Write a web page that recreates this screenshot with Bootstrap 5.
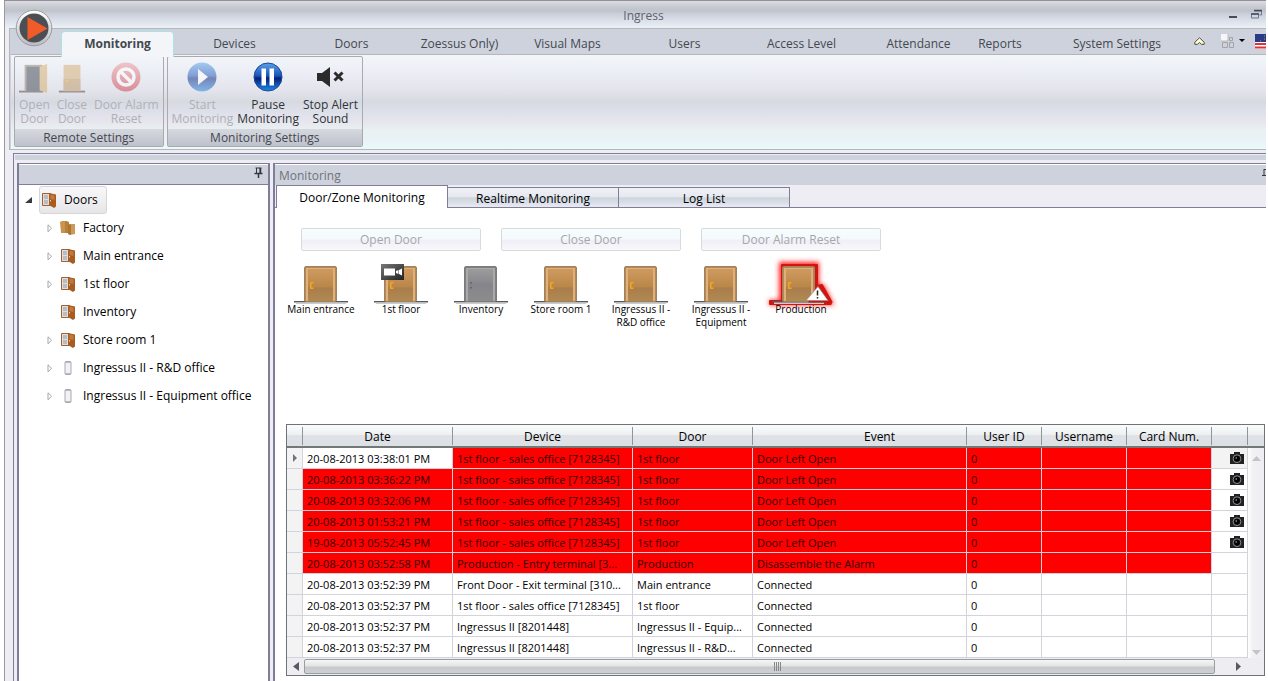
<!DOCTYPE html>
<html lang="en">
<head>
<meta charset="utf-8">
<meta name="viewport" content="width=device-width, initial-scale=1">
<title>Ingress</title>
<link href="https://cdn.jsdelivr.net/npm/bootstrap@5.3.0/dist/css/bootstrap.min.css" rel="stylesheet">
<style>
:root{--line:#807d9b;--pane:#eeedf3;--bar:#ced2dd;--ink:#43484f}
body{font-family:"Open Sans","Noto Sans",sans-serif;font-size:12px;line-height:16px;color:#000;background:#fff}
a{color:inherit;text-decoration:none}
button{font:inherit;color:inherit}
.app-window{min-height:100vh;margin:0 2px 0 4px;background:var(--pane);border-left:1px solid #99989e;border-top:1px solid #929096}
.title-bar{height:27px;color:#5d626b;background:linear-gradient(#dcdce4 0,#c5c9cf 24%,#bec4ca 36%,#cdd1dd 50%,#dfe3ec 78%,#e9f1f6 100%)}
.title-bar .caption{padding-top:7px}
.win-btn{border:0;background:none;padding:0;line-height:0}
.ribbon{margin-left:4px;border:1px solid #b6b6b8;border-right:0;background:var(--bar)}
.orb{position:absolute;left:10px;top:8px;width:38px;height:38px;z-index:3}
.tab-row{height:25px;padding-left:49px;color:var(--ink)}
.tab-row a{width:117px;height:25px;padding-top:7px;text-align:center;white-space:nowrap}
.tab-row a.w-zone{width:99px}
.tab-row a.w-rep{width:46px}
.tab-row a.w-sys{width:148px;margin-left:20px}
.tab-row a.current{width:113px;height:26px;margin:2px 2px 0;padding-top:4px;font-weight:700;background:#f4f5f8;border:1px solid #a9e3e6;border-bottom:0;border-radius:4px 4px 0 0;position:relative}
.ribbon-body{margin:0 0 0 1px;padding:1px 0 2px 3px;gap:3px;border-top:1px solid #b6b6b8;background:linear-gradient(#f2f6fa 0,#e9ebf2 25%,#e4e3eb 38%,#d6dae0 50%,#dcdfe8 58%,#e6e5ee 70%,#e9f1f1 80%,#eaf1f8 90%,#e8fbfa 100%)}
.tool-group{border:1px solid #a9a9ae;border-radius:2px;height:91px}
.tool-group .tools{height:72px;padding:4px 4px 0;gap:7px}
.tool-group .tools.tight{gap:4px}
.tool{border:0;background:none;padding:0;line-height:14px;color:#2f3439;font-size:12px;white-space:nowrap}
.tool svg{display:block;width:32px;height:34px;margin:0 auto 3px}
.tool.slim svg{width:30px}
.tool:disabled{color:#aeb1b7}
.tool:disabled svg{opacity:.5}
.tool-group .name{height:17px;line-height:17px;text-align:center;color:var(--ink);background:linear-gradient(#d6d8df,#bfc2cc)}
.workspace{margin:3px 0 0 8px;border-left:1px solid var(--line);border-top:1px solid var(--line);padding-left:3px}
.dock-strip{height:5px;margin:1px 0 3px -2px;background:var(--bar)}
.dock-gap{gap:3px}
.pane{border:1px solid var(--line);border-bottom:0}
.pane-left{width:253px;border-width:1px 2px 0}
.pane-main{border-width:1px 0 0 2px;min-width:0}
.pane-left .pane-head{height:20px;border:solid var(--line);border-width:0 0 1px;margin-top:1px}
.pane-head{background:var(--bar)}
.pane-main .pane-head{height:20px;margin-top:1px;padding:3px 0 0 4px;color:#6f737b}
.tree{padding:1px 0 0 6px}
.tree ul{list-style:none;margin:0;padding:0 0 0 20px}
.tree .node{height:28px}
.twist{width:8px;height:9px;margin-right:6px;flex:none}
.node a{display:flex;align-items:center;height:28px;padding:0 8px 0 0;gap:7px;white-space:nowrap;border:1px solid transparent}
.node a.chosen{padding-left:1px;border-color:#d6d6d8;border-radius:3px;background:linear-gradient(#f8f8f9,#e6e6e8)}
.node svg.pic{width:16px;height:16px;flex:none}
.view-tabs{height:23px;background:var(--pane);border-bottom:1px solid var(--line);padding-left:1px}
.view-tabs .nav-link{width:171px;height:20px;padding:0;line-height:21px;margin-top:2px;color:#000;text-align:center;border:1px solid var(--line);border-left:0;border-bottom:0;background:linear-gradient(#f0f1f5 0,#e6e9f0 45%,#cfd5dd 52%,#d9dde6 75%,#e9ebf1 100%)}
.view-tabs .nav-link.active{width:172px;height:23px;margin-top:0;line-height:23px;background:#fff;border-left:1px solid var(--line);position:relative}
.actions{padding:20px 0 0 26px;gap:20px}
.soft-btn{width:180px;height:23px;padding:0;border:1px solid #d8dade;border-radius:2px;color:#a6a6aa!important;background:linear-gradient(#f5fdfd 0,#f5fafc 45%,#efeff7 55%,#f8f8fb 100%)}
.tiles{padding:8px 0 0 6px;min-height:120px}
.tile{width:80px;font-size:10px;line-height:13px;text-align:center;color:#000}
.tile svg{display:block;width:70px;height:48px;margin:0 auto -4px;overflow:visible}
.tile span{position:relative}
.log{margin:0 1px 5px 11px;border:1px solid #6d7474}
.log-table{width:100%;table-layout:fixed;border-collapse:separate;border-spacing:0;font-size:11px;line-height:19px}
.log-table th{height:23px;padding:0;font-weight:400;font-size:12px;text-align:center;border-bottom:2px solid #727878;background:linear-gradient(#fbfcfc 0,#eef0f2 45%,#dfe2e6 50%,#dcdfe3 100%)}
.log-table th>div{height:18px;line-height:20px;border-right:1px solid #8d9799}
.log-table td{height:21px;padding:1px 0 0 4px;border-right:1px solid #d3d3dc;border-bottom:1px solid #d3d3dc;overflow:hidden;text-overflow:ellipsis;white-space:nowrap;background:#fff}
.log-table .mark-cell{background:#f3f3f4;padding:0;line-height:0;text-align:center}
.log-table .hit{background:red;color:#300000}
.log-table .cam{padding:0 3px 0 0;text-align:right;line-height:0}
.cam button{border:0;background:none;padding:0}
.side-scroll{width:16px}
.side-scroll .cap{height:23px;border-bottom:2px solid #727878;background:linear-gradient(#fbfcfc 0,#eef0f2 45%,#dfe2e6 50%,#dcdfe3 100%)}
.side-scroll .track{background:linear-gradient(90deg,#fff 0,#f1f0f4 30%,#eeedf2);padding:8px 0 3px}
.foot-scroll{height:17px;background:#eeedf2;padding:0 22px 0 6px;gap:5px}
.thumb{height:15px;padding-left:38px;border:1px solid #999da0;border-radius:2px;background:linear-gradient(#f6f6f6 0,#e4e4e6 45%,#c8c9cc 55%,#cfd0d3 100%)}
</style>
</head>
<body>
<svg width="0" height="0" class="position-absolute" aria-hidden="true">
<defs>
<linearGradient id="wood" x2="0" y2="1"><stop offset="0" stop-color="#d09a5e"/><stop offset=".55" stop-color="#b98749"/><stop offset=".6" stop-color="#a97d4c"/><stop offset="1" stop-color="#b08a52"/></linearGradient>
<linearGradient id="steel" x2="0" y2="1"><stop offset="0" stop-color="#9c9c9c"/><stop offset=".5" stop-color="#85858c"/><stop offset="1" stop-color="#8c8c8c"/></linearGradient>
<linearGradient id="blue" x2="0" y2="1"><stop offset="0" stop-color="#5aa2ec"/><stop offset=".45" stop-color="#1c55b8"/><stop offset=".55" stop-color="#06217c"/><stop offset="1" stop-color="#1f8be8"/></linearGradient>
<linearGradient id="rose" x2="0" y2="1"><stop offset="0" stop-color="#ec9a9c"/><stop offset="1" stop-color="#cf3a44"/></linearGradient>
<linearGradient id="dark" x2="1" y2="1"><stop offset="0" stop-color="#777"/><stop offset="1" stop-color="#222"/></linearGradient>
<filter id="glow" x="-30%" y="-30%" width="160%" height="160%"><feGaussianBlur stdDeviation="2.500"/></filter>
<symbol id="door" viewBox="0 0 70 48"><path d="M8 42h54v1.500H8z" fill="#555b5b"/><path d="M10 43.500h50v1.500H10z" fill="#ccc"/><rect x="18.500" y="7.500" width="32" height="35" rx="1.500" fill="#b68853" stroke="#a08060"/><rect x="20" y="9" width="29" height="33" fill="#ddb07c"/><rect x="22" y="10" width="25" height="32" fill="url(#wood)"/><path d="M24 23h3.500v1.500h-2v4h2V30H24z" fill="#f2a51c"/></symbol>
<symbol id="door-grey" viewBox="0 0 70 48"><path d="M8 42h54v1.500H8z" fill="#555b5b"/><path d="M10 43.500h50v1.500H10z" fill="#ccc"/><rect x="18.500" y="7.500" width="32" height="35" rx="1.500" fill="#808080" stroke="#7b7b7b"/><rect x="20" y="9" width="29" height="33" fill="#aaa"/><rect x="22" y="10" width="25" height="32" fill="url(#steel)"/><path d="M24 23h2v1.500h-2zM24 28h2v1.500h-2z" fill="#666"/></symbol>
<symbol id="leaf" viewBox="0 0 16 16"><path d="M1.500 1.500h8v12h-8z" fill="#dedede" stroke="#a4602c"/><path d="M3 3h4v4H3zM3 8h4v4H3z" fill="#b9bdc2"/><path d="M8 1l7 1.500v12L13 16l-5-3z" fill="#a95c20"/><path d="M9.500 2.500l4 1V8l-4-1z" fill="#c07a3e"/><path d="M9 8h1v1.500H9z" fill="#f3c890"/></symbol>
<symbol id="folders" viewBox="0 0 16 16"><path d="M0 2l2-1h5v12H1z" fill="#c9954e"/><path d="M6 1l3 1v11H5V2z" fill="#b67f3b"/><path d="M8 4h7v10l-5 1-2-1z" fill="#c99a58"/><path d="M8 4l3 1v10l-3-1z" fill="#a87632"/></symbol>
<symbol id="reader" viewBox="0 0 16 16"><rect x="5" y="1.500" width="6" height="13" rx="1" fill="#f2f2f4" stroke="#a9a9b2"/><path d="M5 2.500h6M5 13.500h6" stroke="#b9b9c0"/></symbol>
<symbol id="open-arrow" viewBox="0 0 8 9"><path d="M7 1v6H0z" fill="#3b3b3b"/></symbol>
<symbol id="shut-arrow" viewBox="0 0 8 9"><path d="M3 .8v7l3.600-3.500z" fill="#fff" stroke="#a7a7ad"/></symbol>
<symbol id="camera" viewBox="0 0 14 12"><path d="M4 0h6v2h4v10H0V2h4z" fill="#222"/><circle cx="7" cy="6.700" r="3.900" fill="#111" stroke="#8c8c8c"/><circle cx="7" cy="6.700" r="2.500" fill="#000"/><path d="M5.500 5.500h1.500v1H5.500z" fill="#ccc"/></symbol>
</defs>
</svg>

<div class="app-window d-flex flex-column overflow-hidden position-relative">
  <button class="win-btn orb" aria-label="Application menu"><svg width="38" height="38" viewBox="0 0 38 38"><defs><linearGradient id="ring" x2="0" y2="1"><stop offset="0" stop-color="#fff"/><stop offset="1" stop-color="#b9bbc0"/></linearGradient></defs><circle cx="19" cy="19" r="17.800" fill="url(#ring)" stroke="#9a9ca1"/><circle cx="19" cy="19" r="14.500" fill="#4a4f54"/><path d="M12.500 8v23l20-11.500z" fill="#f15a29"/></svg></button>
  <header class="title-bar d-flex">
    <div class="caption flex-grow-1 text-center ps-3">Ingress</div>
    <div class="d-flex align-items-center position-absolute end-0 top-0 gap-2 pe-1 pt-2">
      <button class="win-btn" aria-label="Minimise"><svg width="14" height="12"><path d="M0 8h8" stroke="#474c56" stroke-width="2"/></svg></button>
      <button class="win-btn" aria-label="Restore"><svg width="11" height="12"><path d="M3.500 2h7v4h-2M.500 5h7v4h-7z" fill="none" stroke="#6c7a92"/><path d="M3 1.500h8M0 5h8" stroke="#474c56" stroke-width="1.500"/></svg></button>
    </div>
  </header>

  <div class="ribbon">
    <nav class="tab-row d-flex" aria-label="Ribbon">
      <a class="current" href="#" aria-current="page">Monitoring</a>
      <a href="#">Devices</a>
      <a href="#">Doors</a>
      <a class="w-zone" href="#">Zoessus Only)</a>
      <a href="#">Visual Maps</a>
      <a href="#">Users</a>
      <a href="#">Access Level</a>
      <a href="#">Attendance</a>
      <a class="w-rep" href="#">Reports</a>
      <a class="w-sys" href="#">System Settings</a>
      <div class="d-flex align-items-center ms-auto">
        <button class="win-btn me-3" aria-label="Collapse ribbon"><svg width="11" height="9"><path d="M5.500 .800l4.700 4.500v2H7.500l-2-1.800-2 1.800H.800v-2z" fill="#fdfbd8" stroke="#4d4d45"/></svg></button>
        <button class="win-btn me-2" aria-label="Layout"><svg width="26" height="16"><path d="M0 0h7v7H0z" fill="#f6f6f8"/><path d="M0 7h7V0" fill="none" stroke="#bbb"/><path d="M8.500 3.500h3v3h-3zM1.500 8.500h5v5h-5zM8.500 8.500h4v5h-4z" fill="none" stroke="#a2a3a8"/><path d="M18 5h6l-3 3z"/></svg></button>
        <button class="win-btn overflow-hidden" aria-label="Language"><svg width="11" height="15"><path fill="#fff" d="M0 0h11v15H0z"/><path d="M0 10h11M0 13.500h11" stroke="#e0343c" stroke-width="2"/><path fill="#2a3a84" d="M0 0h11v8H0z"/><path d="M9 2h1M9 5h1M5 7h1" stroke="#8d97c0"/></svg></button>
      </div>
    </nav>
    <div class="ribbon-body d-flex">
      <section class="tool-group" aria-label="Remote Settings">
        <div class="tools d-flex align-items-start">
          <button class="tool slim" disabled><svg viewBox="0 0 32 34"><path d="M0 31.500h26" stroke="#444" stroke-width="2"/><path d="M6 3h19v28H6z" fill="#8c8270"/><path d="M8 5h15v26H8z" fill="#3b434c"/><path d="M22 5l8-3v31l-8-3z" fill="#d9ac6b"/></svg>Open<br>Door</button>
          <button class="tool slim" disabled><svg viewBox="0 0 32 34"><path d="M2 31.500h28" stroke="#444" stroke-width="2"/><path d="M7 3h18v28H7z" fill="#d6ac70"/><path d="M7 18h18v13H7z" fill="#bf9863"/><path d="M9 19h3v2H9z" fill="#f2a51c"/></svg>Close<br>Door</button>
          <button class="tool" disabled><svg viewBox="0 0 32 34"><circle cx="16" cy="16" r="14.500" fill="url(#rose)"/><circle cx="16" cy="16" r="8" fill="none" stroke="#fff" stroke-width="3.500"/><path d="M10.500 10.500l11 11" stroke="#fff" stroke-width="3.500"/></svg>Door Alarm<br>Reset</button>
        </div>
        <div class="name">Remote Settings</div>
      </section>
      <section class="tool-group" aria-label="Monitoring Settings">
        <div class="tools tight d-flex align-items-start">
          <button class="tool" disabled><svg viewBox="0 0 32 34"><circle cx="16" cy="16" r="14.500" fill="url(#blue)"/><path d="M12 8v16l10-8z" fill="#fff"/></svg>Start<br>Monitoring</button>
          <button class="tool"><svg viewBox="0 0 32 34"><circle cx="16" cy="16" r="14" fill="url(#blue)" stroke="#1a4796"/><path d="M9.500 7.500h4.500v17H9.500zM17.500 7.500H22v17h-4.500z" fill="#fff"/></svg>Pause<br>Monitoring</button>
          <button class="tool"><svg viewBox="0 0 32 34"><path d="M3 12h5l8-6v20l-8-6H3z" fill="#2b2b2b"/><path d="M20.500 11.500l8 8M28.500 11.500l-8 8" stroke="#2b2b2b" stroke-width="3"/></svg>Stop Alert<br>Sound</button>
        </div>
        <div class="name">Monitoring Settings</div>
      </section>
    </div>
  </div>

  <div class="workspace flex-grow-1 d-flex flex-column">
    <div class="dock-strip"></div>
    <div class="d-flex flex-grow-1 dock-gap">
      <aside class="pane pane-left bg-white flex-shrink-0">
        <div class="pane-head d-flex justify-content-end align-items-start pe-1">
          <button class="win-btn" aria-label="Pin panel"><svg width="11" height="14"><path d="M3.500 3v5M2.500 3h6M7 3v5" stroke="#33373d" fill="none"/><path d="M7.500 3v5M1.500 8.500h8M5.500 9v4" stroke="#33373d" stroke-width="1.500"/></svg></button>
        </div>
        <div class="tree">
          <div class="node d-flex align-items-center"><svg class="twist"><use href="#open-arrow"/></svg><a class="chosen" href="#"><svg class="pic"><use href="#leaf"/></svg>Doors</a></div>
          <ul>
            <li class="node d-flex align-items-center"><svg class="twist"><use href="#shut-arrow"/></svg><a href="#"><svg class="pic"><use href="#folders"/></svg>Factory</a></li>
            <li class="node d-flex align-items-center"><svg class="twist"><use href="#shut-arrow"/></svg><a href="#"><svg class="pic"><use href="#leaf"/></svg>Main entrance</a></li>
            <li class="node d-flex align-items-center"><svg class="twist"><use href="#shut-arrow"/></svg><a href="#"><svg class="pic"><use href="#leaf"/></svg>1st floor</a></li>
            <li class="node d-flex align-items-center"><span class="twist"></span><a href="#"><svg class="pic"><use href="#leaf"/></svg>Inventory</a></li>
            <li class="node d-flex align-items-center"><svg class="twist"><use href="#shut-arrow"/></svg><a href="#"><svg class="pic"><use href="#leaf"/></svg>Store room 1</a></li>
            <li class="node d-flex align-items-center"><svg class="twist"><use href="#shut-arrow"/></svg><a href="#"><svg class="pic"><use href="#reader"/></svg>Ingressus II - R&amp;D office</a></li>
            <li class="node d-flex align-items-center"><svg class="twist"><use href="#shut-arrow"/></svg><a href="#"><svg class="pic"><use href="#reader"/></svg>Ingressus II - Equipment office</a></li>
          </ul>
        </div>
      </aside>

      <main class="pane pane-main bg-white flex-grow-1 d-flex flex-column">
        <div class="pane-head d-flex justify-content-between">Monitoring
          <button class="win-btn align-self-start" aria-label="Pin panel"><svg width="4" height="10"><path d="M2 1v6M2 1.500h2M0 7.500h4" stroke="#33373d" fill="none"/></svg></button>
        </div>
        <nav class="view-tabs nav" aria-label="Views">
          <a class="nav-link active" href="#" aria-current="page">Door/Zone Monitoring</a>
          <a class="nav-link" href="#">Realtime Monitoring</a>
          <a class="nav-link" href="#">Log List</a>
        </nav>
        <div class="actions d-flex">
          <button class="soft-btn" disabled>Open Door</button>
          <button class="soft-btn" disabled>Close Door</button>
          <button class="soft-btn" disabled>Door Alarm Reset</button>
        </div>
        <div class="tiles d-flex flex-wrap flex-grow-1 align-items-start">
          <a class="tile" href="#"><svg><use href="#door"/></svg><span>Main entrance</span></a>
          <a class="tile" href="#"><svg viewBox="0 0 70 48"><use href="#door"/><rect x="15" y="5" width="23" height="16" fill="url(#dark)"/><path d="M18 9.500h11v7H18zM30 12l2.500-1v4L30 14zM33 11l3-1.500v7L33 15z" fill="#fff"/></svg><span>1st floor</span></a>
          <a class="tile" href="#"><svg><use href="#door-grey"/></svg><span>Inventory</span></a>
          <a class="tile" href="#"><svg><use href="#door"/></svg><span>Store room 1</span></a>
          <a class="tile" href="#"><svg><use href="#door"/></svg><span>Ingressus II -<br>R&amp;D office</span></a>
          <a class="tile" href="#"><svg><use href="#door"/></svg><span>Ingressus II -<br>Equipment</span></a>
          <a class="tile" href="#"><svg viewBox="0 0 70 48"><path d="M13 3h40v22l5 1 10 20H3v-5h10z" fill="#f22" filter="url(#glow)"/><path d="M16 6h35V27l5-1 9.500 17-1 2H4v-3h12z" fill="#d4150f" stroke="#d4150f" stroke-width="2" stroke-linejoin="round"/><use href="#door" x="-2"/><path d="M53 26l12 17.500H42z" fill="#c8170f"/><path d="M52 27.500l10 14H40z" fill="#fff" stroke="#9a8a80" stroke-width=".8"/><path d="M51.500 31.500v5M51.500 38v1.500" stroke="#222" stroke-width="1.500"/></svg><span>Production</span></a>
        </div>

        <div class="log">
          <div class="d-flex">
            <table class="log-table flex-grow-1">
              <colgroup><col style="width:16px"><col style="width:150px"><col style="width:180px"><col style="width:120px"><col><col style="width:75px"><col style="width:85px"><col style="width:85px"><col style="width:36px"></colgroup>
              <thead><tr><th><div></div></th><th><div>Date</div></th><th><div>Device</div></th><th><div>Door</div></th><th><div class="ps-4 ms-3">Event</div></th><th><div>User ID</div></th><th><div>Username</div></th><th><div>Card Num.</div></th><th><div></div></th></tr></thead>
              <tbody>
<tr><td class="mark-cell"><svg width="6" height="8"><path d="M1 0v8l4-4z" fill="#74747c"/></svg></td><td>20-08-2013 03:38:01 PM</td><td class="hit">1st floor - sales office [7128345]</td><td class="hit">1st floor</td><td class="hit">Door Left Open</td><td class="hit">0</td><td class="hit"></td><td class="hit"></td><td class="cam mark-cell"><button aria-label="Snapshot"><svg width="14" height="12"><use href="#camera"/></svg></button></td></tr>
<tr><td class="mark-cell"></td><td class="hit">20-08-2013 03:36:22 PM</td><td class="hit">1st floor - sales office [7128345]</td><td class="hit">1st floor</td><td class="hit">Door Left Open</td><td class="hit">0</td><td class="hit"></td><td class="hit"></td><td class="cam"><button aria-label="Snapshot"><svg width="14" height="12"><use href="#camera"/></svg></button></td></tr>
<tr><td class="mark-cell"></td><td class="hit">20-08-2013 03:32:06 PM</td><td class="hit">1st floor - sales office [7128345]</td><td class="hit">1st floor</td><td class="hit">Door Left Open</td><td class="hit">0</td><td class="hit"></td><td class="hit"></td><td class="cam"><button aria-label="Snapshot"><svg width="14" height="12"><use href="#camera"/></svg></button></td></tr>
<tr><td class="mark-cell"></td><td class="hit">20-08-2013 01:53:21 PM</td><td class="hit">1st floor - sales office [7128345]</td><td class="hit">1st floor</td><td class="hit">Door Left Open</td><td class="hit">0</td><td class="hit"></td><td class="hit"></td><td class="cam"><button aria-label="Snapshot"><svg width="14" height="12"><use href="#camera"/></svg></button></td></tr>
<tr><td class="mark-cell"></td><td class="hit">19-08-2013 05:52:45 PM</td><td class="hit">1st floor - sales office [7128345]</td><td class="hit">1st floor</td><td class="hit">Door Left Open</td><td class="hit">0</td><td class="hit"></td><td class="hit"></td><td class="cam"><button aria-label="Snapshot"><svg width="14" height="12"><use href="#camera"/></svg></button></td></tr>
<tr><td class="mark-cell"></td><td class="hit">20-08-2013 03:52:58 PM</td><td class="hit">Production - Entry terminal [3...</td><td class="hit">Production</td><td class="hit">Disassemble the Alarm</td><td class="hit">0</td><td class="hit"></td><td class="hit"></td><td></td></tr>
<tr><td class="mark-cell"></td><td>20-08-2013 03:52:39 PM</td><td>Front Door - Exit terminal [310...</td><td>Main entrance</td><td>Connected</td><td>0</td><td></td><td></td><td></td></tr>
<tr><td class="mark-cell"></td><td>20-08-2013 03:52:37 PM</td><td>1st floor - sales office [7128345]</td><td>1st floor</td><td>Connected</td><td>0</td><td></td><td></td><td></td></tr>
<tr><td class="mark-cell"></td><td>20-08-2013 03:52:37 PM</td><td>Ingressus II [8201448]</td><td>Ingressus II - Equip...</td><td>Connected</td><td>0</td><td></td><td></td><td></td></tr>
<tr><td class="mark-cell"></td><td>20-08-2013 03:52:37 PM</td><td>Ingressus II [8201448]</td><td>Ingressus II - R&amp;D...</td><td>Connected</td><td>0</td><td></td><td></td><td></td></tr>
              </tbody>
            </table>
            <div class="side-scroll d-flex flex-column flex-shrink-0">
              <div class="cap"></div>
              <div class="track flex-grow-1 d-flex flex-column justify-content-between align-items-center">
                <svg width="9" height="5"><path d="M0 5h9L4.500 0z" fill="#c3c3c8"/></svg>
                <svg width="9" height="5"><path d="M0 0h9L4.500 5z" fill="#c3c3c8"/></svg>
              </div>
            </div>
          </div>
          <div class="foot-scroll d-flex align-items-center">
            <svg width="6" height="9"><path d="M6 0v9L0 4.500z" fill="#555a66"/></svg>
            <div class="thumb flex-grow-1 d-flex justify-content-center align-items-center me-3"><svg width="9" height="9"><path d="M.500 0v9M2.500 0v9M4.500 0v9M6.500 0v9" stroke="#85878c"/></svg></div>
            <svg width="6" height="9"><path d="M0 0v9l5-4.500z" fill="#555a66"/></svg>
          </div>
        </div>
      </main>
    </div>
  </div>
</div>
<script src="https://cdn.jsdelivr.net/npm/bootstrap@5.3.0/dist/js/bootstrap.bundle.min.js"></script>
</body>
</html>
